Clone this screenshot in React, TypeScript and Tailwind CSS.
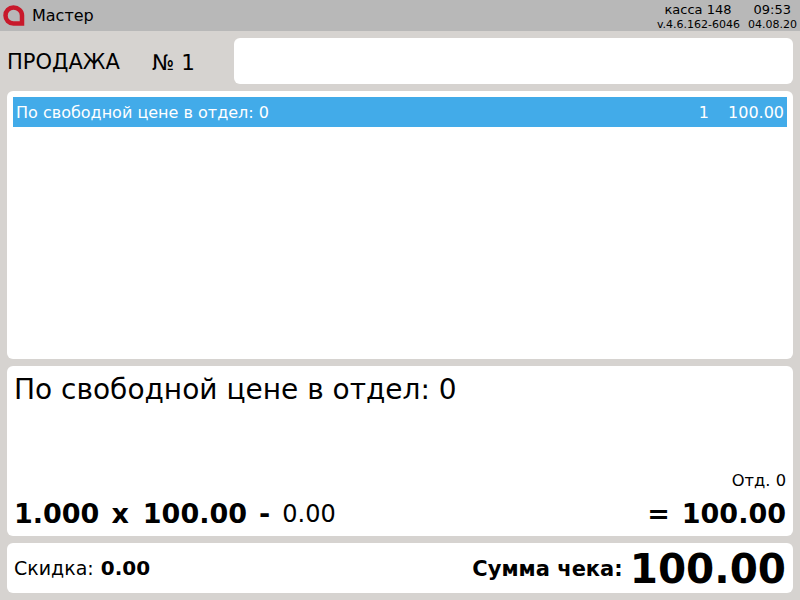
const font = { fontFamily: '"DejaVu Sans", sans-serif' };

export default function App() {
  return (
    <div
      className="flex h-[600px] w-[800px] flex-col overflow-hidden bg-[#d6d3d0] text-black"
      style={font}
    >
      {/* Header */}
      <header className="flex h-[31px] shrink-0 items-center justify-between bg-[#b8b8b8]">
        <div className="flex items-center pt-[1px]">
          <svg viewBox="0 0 22 22" className="ml-[3px] h-[22px] w-[22px]">
            <path
              d="M10.5 2.5 C5.8 2.5 2.5 6 2.5 10.5 C2.5 15 5.8 18.5 10.5 18.5 L19 18.5 L19 10.5 C19 6 15.2 2.5 10.5 2.5 Z"
              fill="none"
              stroke="#c8192b"
              strokeWidth="4.5"
            />
          </svg>
          <span className="ml-[7px] text-[16px]">Мастер</span>
        </div>
        <div className="mr-[3px] flex flex-col items-end pt-[2px] text-[11px] leading-[15px]">
          <div className="flex text-[13px]">
            <span>касса 148</span>
            <span className="mr-[6px] ml-[22px]">09:53</span>
          </div>
          <div className="flex">
            <span>v.4.6.162-6046</span>
            <span className="ml-[8px]">04.08.20</span>
          </div>
        </div>
      </header>

      {/* Sale title + input */}
      <div className="mt-[7px] flex h-[46px] shrink-0 items-center pr-[7px] pl-[7px]">
        <span className="w-[145px] pt-[4px] text-[21px]">ПРОДАЖА</span>
        <span className="w-[82px] pt-[4px] text-[21.5px]">№ 1</span>
        <div className="h-full flex-1 rounded-md bg-white" />
      </div>

      {/* Items */}
      <section className="mx-[7px] mt-[7px] h-[268px] shrink-0 rounded-md bg-white p-[6px]">
        <div className="flex h-[30px] items-center justify-between bg-[#42abe9] pr-[3px] pl-[3px] text-[16px] text-white">
          <span className="pt-[1px]">По свободной цене в отдел: 0</span>
          <div className="flex pt-[1px]">
            <span>1</span>
            <span className="ml-[19px]">100.00</span>
          </div>
        </div>
      </section>

      {/* Current item */}
      <section className="mx-[7px] mt-[7px] flex h-[170px] shrink-0 flex-col rounded-md bg-white px-[7px]">
        <div className="mt-[6px] text-[28px] leading-[36px]">По свободной цене в отдел: 0</div>
        <div className="mt-auto text-right text-[16.3px] leading-[20px]">Отд. 0</div>
        <div className="mt-[6px] mb-[5px] flex items-center justify-between text-[27px] leading-[34px]">
          <div className="flex items-center font-bold">
            <span>1.000</span>
            <span className="ml-[12px]">x</span>
            <span className="ml-[14px]">100.00</span>
            <span className="ml-[12px]">-</span>
            <span className="ml-[12px] text-[24px] font-normal">0.00</span>
          </div>
          <div className="flex items-center font-bold">
            <span>=</span>
            <span className="ml-[12px]">100.00</span>
          </div>
        </div>
      </section>

      {/* Totals */}
      <section className="mx-[7px] mt-[7px] flex h-[50px] shrink-0 items-center justify-between rounded-md bg-white px-[7px]">
        <div className="text-[19px]">
          Скидка: <span className="ml-[1px] text-[20px] font-bold">0.00</span>
        </div>
        <div className="flex items-center">
          <span className="pt-[4px] text-[21px] font-bold">Сумма чека:</span>
          <span className="ml-[7px] pt-[1px] text-[40.5px] leading-[50px] font-bold">100.00</span>
        </div>
      </section>
    </div>
  );
}
